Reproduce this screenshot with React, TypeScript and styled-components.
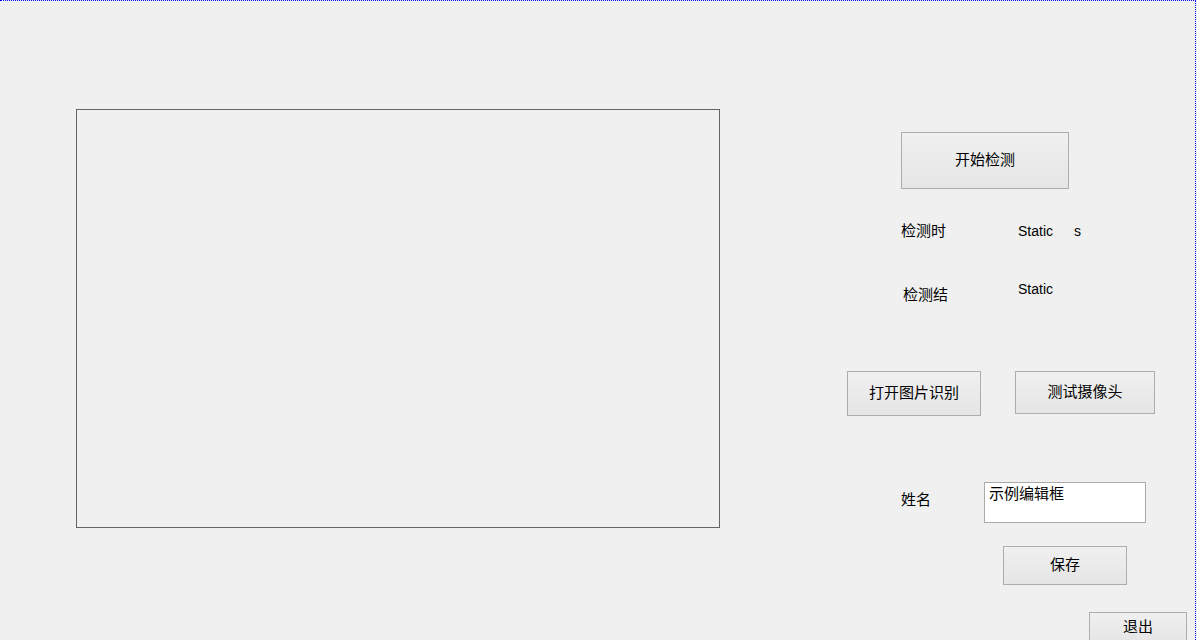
import React from "react";
import styled, { createGlobalStyle } from "styled-components";

const GlobalStyle = createGlobalStyle`
  html, body {
    margin: 0;
    padding: 0;
    background: #f0f0f0;
  }
  body {
    font-family: "Liberation Sans", "Noto Sans CJK SC", sans-serif;
    font-size: 15px;
    color: #000;
  }
`;

const Dialog = styled.div`
  box-sizing: border-box;
  width: 1196px;
  height: 640px;
  overflow: hidden;
  background: #f0f0f0;
  border-top: 1px dotted #0000ff;
  border-right: 1px dotted #0000ff;
  display: flex;
  align-items: flex-start;
`;

const PictureFrame = styled.div`
  box-sizing: border-box;
  flex: none;
  width: 644px;
  height: 419px;
  margin: 108px 0 0 76px;
  border: 1px solid #646464;
`;

const SidePanel = styled.div`
  flex: none;
  width: 340px;
  margin-left: 127px;
  display: flex;
  flex-direction: column;
  align-items: flex-start;
`;

const Button = styled.button<{ $w: number; $h: number; $top: number; $left?: number }>`
  box-sizing: border-box;
  flex: none;
  width: ${(p) => p.$w}px;
  height: ${(p) => p.$h}px;
  margin-top: ${(p) => p.$top}px;
  margin-left: ${(p) => p.$left ?? 0}px;
  padding: 0 0 2px 0;
  border: 1px solid #adadad;
  border-radius: 0;
  background: linear-gradient(to bottom, #f0f0f0, #e5e5e5);
  font-family: "Liberation Sans", "Noto Sans CJK SC", sans-serif;
  font-size: 15px;
  color: #000;
  line-height: 20px;
  cursor: default;
`;

const Row = styled.div<{ $top: number; $h: number; $left?: number }>`
  display: flex;
  align-items: flex-start;
  height: ${(p) => p.$h}px;
  margin-top: ${(p) => p.$top}px;
  margin-left: ${(p) => p.$left ?? 0}px;
`;

const Label = styled.span<{ $w: number; $dy?: number; $latin?: boolean }>`
  flex: none;
  width: ${(p) => p.$w}px;
  margin-top: ${(p) => p.$dy ?? 0}px;
  height: 20px;
  line-height: 20px;
  font-size: ${(p) => (p.$latin ? 14 : 15)}px;
  white-space: nowrap;
`;

const EditBox = styled.div`
  box-sizing: border-box;
  flex: none;
  width: 162px;
  height: 41px;
  padding: 1px 4px;
  background: #ffffff;
  border: 1px solid #ababab;
  line-height: 20px;
  font-size: 15px;
  white-space: nowrap;
`;

export default function App() {
  return (
    <>
      <GlobalStyle />
      <Dialog>
        <PictureFrame />
        <SidePanel>
          <Button $w={168} $h={57} $top={131} $left={54}>
            开始检测
          </Button>
          <Row $top={32} $h={20} $left={54}>
            <Label $w={117}>检测时</Label>
            <Label $w={56} $latin>
              Static
            </Label>
            <Label $w={20} $latin>
              s
            </Label>
          </Row>
          <Row $top={38} $h={26} $left={56}>
            <Label $w={115} $dy={6}>
              检测结
            </Label>
            <Label $w={60} $latin>
              Static
            </Label>
          </Row>
          <Row $top={66} $h={45}>
            <Button $w={134} $h={45} $top={0}>
              打开图片识别
            </Button>
            <Button $w={140} $h={43} $top={0} $left={34}>
              测试摄像头
            </Button>
          </Row>
          <Row $top={66} $h={41} $left={54}>
            <Label $w={83} $dy={8}>
              姓名
            </Label>
            <EditBox>示例编辑框</EditBox>
          </Row>
          <Button $w={124} $h={39} $top={23} $left={156}>
            保存
          </Button>
          <Button $w={98} $h={31} $top={27} $left={242}>
            退出
          </Button>
        </SidePanel>
      </Dialog>
    </>
  );
}
